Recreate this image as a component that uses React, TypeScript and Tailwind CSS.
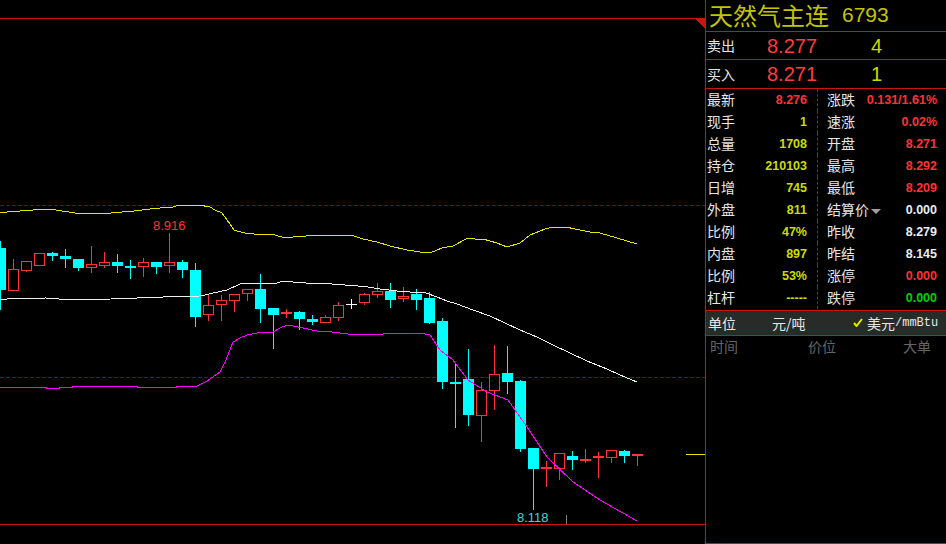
// candle: [slot, top of body, bottom of body, wick top, wick bottom, kind]
// kind: c = cyan filled, r = red hollow, f = red flat, w = white cross
type Candle = [number, number, number, number, number, string];

const candles: Candle[] = [
  [0, 248, 290, 241, 310, "c"],
  [1, 269, 290, 259, 290, "r"],
  [2, 261, 270, 261, 272, "r"],
  [3, 253, 265, 253, 265, "r"],
  [4, 253, 256, 252, 261, "c"],
  [5, 256, 259, 249, 268, "c"],
  [6, 259, 268, 259, 271, "c"],
  [7, 264, 267, 246, 273, "r"],
  [8, 262, 265, 252, 268, "r"],
  [9, 262, 266, 254, 273, "c"],
  [10, 266, 268, 260, 279, "c"],
  [11, 262, 266, 258, 277, "r"],
  [12, 262, 267, 262, 274, "c"],
  [13, 262, 265, 233, 273, "r"],
  [14, 262, 270, 260, 278, "c"],
  [15, 270, 317, 263, 327, "c"],
  [16, 305, 314, 295, 321, "r"],
  [17, 300, 304, 295, 321, "r"],
  [18, 294, 300, 294, 312, "r"],
  [19, 289, 293, 289, 301, "r"],
  [20, 289, 309, 274, 323, "c"],
  [21, 308, 315, 308, 349, "c"],
  [22, 312, 314, 309, 318, "f"],
  [23, 312, 319, 311, 330, "c"],
  [24, 319, 322, 315, 325, "c"],
  [25, 317, 322, 315, 322, "r"],
  [26, 305, 317, 302, 321, "r"],
  [27, 304, 305, 299, 309, "w"],
  [28, 294, 302, 293, 305, "r"],
  [29, 291, 294, 283, 298, "r"],
  [30, 291, 300, 283, 308, "c"],
  [31, 296, 298, 287, 302, "r"],
  [32, 294, 300, 289, 310, "c"],
  [33, 298, 323, 292, 324, "c"],
  [34, 321, 382, 318, 389, "c"],
  [35, 382, 384, 363, 428, "c"],
  [36, 379, 415, 349, 426, "c"],
  [37, 390, 415, 382, 442, "r"],
  [38, 374, 390, 345, 410, "r"],
  [39, 373, 382, 346, 394, "c"],
  [40, 381, 449, 380, 452, "c"],
  [41, 448, 469, 448, 510, "c"],
  [42, 467, 469, 461, 487, "f"],
  [43, 453, 468, 453, 480, "r"],
  [44, 456, 460, 451, 470, "c"],
  [45, 459, 461, 449, 463, "f"],
  [46, 456, 458, 452, 478, "f"],
  [47, 450, 457, 450, 463, "r"],
  [48, 451, 456, 450, 463, "c"],
  [49, 454, 456, 454, 466, "f"],
];

const upperBand =
  "0,213 7,212 20,211 33,210 46,209 56,210 62,211 69,212 75,213 111,213 134,211 150,209 160,208 173,207 179,205 199,205 210,207 215,210 222,213 227,220 230,224 234,230 237,231 245,233 254,234 275,235 285,238 293,237 306,236 319,235 345,235 354,236 363,239 377,242 390,246 407,250 420,252 430,253 442,248 453,246 468,238 475,239 483,239 497,243 507,247 520,243 530,235 545,229 553,227 566,227 575,229 590,232 600,233 617,238 637,244";
const midBand =
  "0,300 7,299 46,298 59,299 72,300 111,299 137,298 163,297 176,296 199,296 205,295 213,293 227,290 240,284 250,283 277,283 283,281 293,282 306,283 332,284 345,285 358,286 368,287 380,289 397,291 410,292 426,293 437,297 447,301 457,304 473,310 490,316 505,323 520,330 537,337 553,345 570,353 587,361 607,369 620,375 637,382";
const lowerBand =
  "0,387 46,387 46,388 59,388 59,387 72,387 72,386 137,386 137,387 176,387 176,386 197,386 207,381 220,372 226,360 233,342 240,338 247,335 257,333 273,332 280,328 287,325 293,326 303,328 317,331 332,332 348,334 383,334 384,333 420,333 430,335 440,350 453,360 468,380 487,392 508,400 527,427 547,457 573,482 600,500 637,521";

const RED = "#ff3333";
const CYAN = "#00ffff";

function CandleMark({ c }: { c: Candle }) {
  const [slot, top, bottom, wickTop, wickBottom, kind] = c;
  const x = slot * 13;
  const color = kind === "c" ? CYAN : kind === "w" ? "#ffffff" : RED;
  return (
    <g>
      <rect x={x} y={wickTop} width={1} height={wickBottom - wickTop} fill={color} />
      {kind === "r" ? (
        <rect x={x - 4.5} y={top + 0.5} width={10} height={bottom - top} fill="#000" stroke={color} />
      ) : (
        <rect x={x - 5} y={top} width={11} height={bottom - top} fill={color} />
      )}
    </g>
  );
}

function Chart() {
  return (
    <div className="h-[544px] w-[705px] shrink-0">
      <svg width={705} height={544} shapeRendering="crispEdges" className="block">
        <rect x={0} y={18} width={705} height={1} fill="#c81414" />
        <rect x={0} y={524} width={705} height={1} fill="#c81414" />
        <polygon points="694,18 705,18 705,29" fill="#c81414" />
        <line x1={0} y1={205.5} x2={705} y2={205.5} stroke="#7c0a0a" strokeDasharray="4 2" />
        <line x1={0} y1={377.5} x2={705} y2={377.5} stroke="#7c0a0a" strokeDasharray="4 2" />
        {candles.map((c) => (
          <CandleMark key={c[0]} c={c} />
        ))}
        <polyline points={midBand} fill="none" stroke="#f0f0f0" />
        <polyline points={upperBand} fill="none" stroke="#e6e600" />
        <polyline points={lowerBand} fill="none" stroke="#ff00ff" />
        <rect x={686} y={454} width={19} height={1} fill="#e6e600" />
        <rect x={566} y={515} width={1} height={9} fill="#808080" />
        <text x={153} y={230} fill={RED} fontSize={13} fontFamily="Liberation Sans, sans-serif" shapeRendering="auto">
          8.916
        </text>
        <text x={517} y={522} fill="#33dddd" fontSize={13} fontFamily="Liberation Sans, sans-serif" shapeRendering="auto">
          8.118
        </text>
      </svg>
    </div>
  );
}

const red = "text-[#ff3232]";
const yellow = "text-[#cddc00]";
const white = "text-[#e8eef8]";
const green = "text-[#00d200]";

const rows = [
  ["最新", "8.276", red, "涨跌", "0.131/1.61%", red],
  ["现手", "1", yellow, "速涨", "0.02%", red],
  ["总量", "1708", yellow, "开盘", "8.271", red],
  ["持仓", "210103", yellow, "最高", "8.292", red],
  ["日增", "745", yellow, "最低", "8.209", red],
  ["外盘", "811", yellow, "结算价", "0.000", white],
  ["比例", "47%", yellow, "昨收", "8.279", white],
  ["内盘", "897", yellow, "昨结", "8.145", white],
  ["比例", "53%", yellow, "涨停", "0.000", red],
  ["杠杆", "-----", yellow, "跌停", "0.000", green],
];

function Panel() {
  return (
    <div className="flex h-[544px] w-[241px] flex-col border-b border-l border-[#c81414] text-[14px] leading-none text-[#e6e6e6]">
      <div className="flex h-[32px] shrink-0 items-center border-b border-[#c81414] pb-[2px] pl-[3px] text-[#c4c400]">
        <span className="w-[133px] text-[24px] leading-[28px] whitespace-nowrap">天然气主连</span>
        <span className="font-['Liberation_Sans'] text-[21px]">6793</span>
      </div>
      <div className="flex h-[28px] shrink-0 items-center border-b border-[#c81414] pl-[1px]">
        <span className="w-[60px] pb-[2px]">卖出</span>
        <span className="w-[104px] font-['Liberation_Sans'] text-[20px] text-[#ff3c3c]">8.277</span>
        <span className="font-['Liberation_Sans'] text-[20px] text-[#cdd800]">4</span>
      </div>
      <div className="flex h-[29px] shrink-0 items-center border-b border-[#c81414] pl-[1px]">
        <span className="w-[60px]">买入</span>
        <span className="w-[104px] font-['Liberation_Sans'] text-[20px] text-[#ff3c3c]">8.271</span>
        <span className="font-['Liberation_Sans'] text-[20px] text-[#cdd800]">1</span>
      </div>
      <div className="flex h-[221px] shrink-0 flex-col">
        {rows.map((r, i) => (
          <div key={i} className="flex h-[22px] items-center">
            <div className="flex h-full w-[112px] items-center justify-between border-r border-dashed border-[#b41414] pr-[10px] pl-[1px]">
              <span className="pb-[3px]">{r[0]}</span>
              <span className={`font-['Liberation_Sans'] text-[12.5px] font-bold ${r[2]}`}>{r[1]}</span>
            </div>
            <div className="flex flex-1 items-center justify-between pr-[9px] pl-[9px]">
              <span className="flex items-center pb-[3px]">
                {r[3]}
                {r[3] === "结算价" && (
                  <span className="mt-[5px] ml-[2px] h-0 w-0 border-x-[5px] border-t-[5px] border-x-transparent border-t-[#a0a0a0]" />
                )}
              </span>
              <span className={`font-['Liberation_Sans'] text-[12.5px] font-bold ${r[5]}`}>{r[4]}</span>
            </div>
          </div>
        ))}
      </div>
      <div className="flex h-[26px] shrink-0 items-center border-y border-[#c81414] bg-[#282c28] pr-[8px] pb-[1px] pl-[2px] whitespace-nowrap">
        <span className="w-[64px] shrink-0">单位</span>
        <span className="w-[81px] shrink-0">元/吨</span>
        <svg width={10} height={9} viewBox="0 0 10 9" className="mr-[4px] shrink-0">
          <path d="M1 5 L3.5 8 L9 1" fill="none" stroke="#e6e600" strokeWidth={2} />
        </svg>
        <span className="shrink-0">美元</span>
        <span className="shrink-0 font-['Liberation_Mono'] text-[12px]">/mmBtu</span>
      </div>
      <div className="flex h-[24px] shrink-0 items-center pb-[4px] pl-[4px] text-[#666666]">
        <span className="w-[98px]">时间</span>
        <span className="w-[95px]">价位</span>
        <span>大单</span>
      </div>
    </div>
  );
}

export default function App() {
  return (
    <div className="flex h-[544px] w-[946px] overflow-hidden bg-black font-['Noto_Sans_CJK_SC','Liberation_Sans',sans-serif]">
      <Chart />
      <Panel />
    </div>
  );
}
